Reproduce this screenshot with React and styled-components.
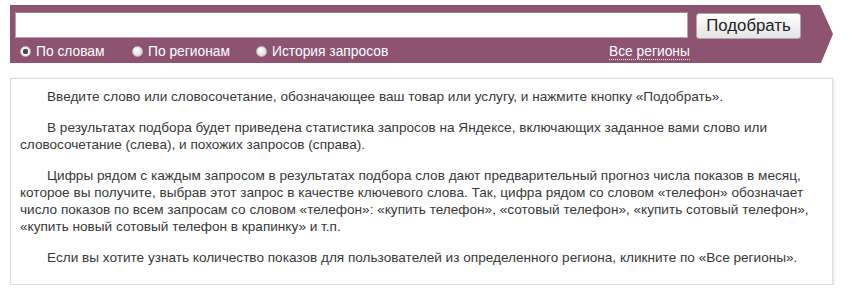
import React from 'react';
import styled, { createGlobalStyle } from 'styled-components';

const Global = createGlobalStyle`
	body {
		margin: 0;
		background: #fff;
		font-family: Arial, "Liberation Sans", sans-serif;
	}
`;

function Radio({ label, checked, width }) {
	return (
		<RadioLabel style={{ width }}>
			<Dot $checked={checked} />
			{label}
		</RadioLabel>
	);
}

export default function App() {
	return (
		<Page>
			<Global />
			<Bar>
				<SearchRow>
					<SearchInput type="text" />
					<Button>Подобрать</Button>
				</SearchRow>
				<Options>
					<Radio label="По словам" checked width={112} />
					<Radio label="По регионам" width={124} />
					<Radio label="История запросов" width={353} />
					<Regions>Все регионы</Regions>
				</Options>
			</Bar>
			<Help>
				<p>Введите слово или словосочетание, обозначающее ваш товар или услугу, и нажмите кнопку «Подобрать».</p>
				<p>
					В результатах подбора будет приведена статистика запросов на Яндексе, включающих заданное вами слово или
					словосочетание (слева), и похожих запросов (справа).
				</p>
				<p>
					Цифры рядом с каждым запросом в результатах подбора слов дают предварительный прогноз числа показов в месяц,
					которое вы получите, выбрав этот запрос в качестве ключевого слова. Так, цифра рядом со словом «телефон» обозначает
					число показов по всем запросам со словом «телефон»: «купить телефон», «сотовый телефон», «купить сотовый телефон»,
					«купить новый сотовый телефон в крапинку» и т.п.
				</p>
				<p>Если вы хотите узнать количество показов для пользователей из определенного региона, кликните по «Все регионы».</p>
			</Help>
		</Page>
	);
}

const Page = styled.div`
	padding: 5px 0 0 10px;
	width: 823px;
`;

const Bar = styled.div`
	background: #8d5371;
	height: 58px;
	padding: 7px 0 0 5px;
	box-sizing: border-box;
	clip-path: polygon(0 0, calc(100% - 13px) 0, 100% 50%, calc(100% - 12px) 100%, 0 100%);
`;

const SearchRow = styled.div`
	display: flex;
	align-items: flex-start;
	gap: 8px;
`;

const SearchInput = styled.input`
	width: 673px;
	height: 26px;
	box-sizing: border-box;
	border: 1px solid #b9a0ad;
	border-top-color: #9c8190;
	background: #fff;
	margin: 0;
	outline: none;
`;

const Button = styled.button`
	width: 105px;
	height: 26px;
	margin-top: 1px;
	box-sizing: border-box;
	border: 1px solid #a9a9a9;
	border-radius: 3px;
	background: linear-gradient(#ffffff, #e4e4e4);
	font-family: Arial, "Liberation Sans", sans-serif;
	font-size: 16.8px;
	color: #222;
	padding: 0;
`;

const Options = styled.div`
	display: flex;
	align-items: center;
	height: 25px;
	padding-left: 5px;
`;

const RadioLabel = styled.label`
	display: flex;
	align-items: center;
	gap: 5px;
	color: #fff;
	font-size: 13.8px;
	flex: none;
`;

const Dot = styled.span`
	width: 11px;
	height: 11px;
	border-radius: 50%;
	box-sizing: border-box;
	background: ${p => (p.$checked ? 'radial-gradient(circle, #4a4a4a 0 2.5px, #f2f2f2 3px)' : 'radial-gradient(circle at 40% 35%, #ffffff, #cfcfcf)')};
	border: 1px solid #bdbdbd;
`;

const Regions = styled.span`
	color: #fff;
	font-size: 13.8px;
	border-bottom: 1px dotted #f0e0ea;
	line-height: 14px;
	margin-top: 2px;
`;

const Help = styled.div`
	margin-top: 15px;
	border: 1px solid #dcdcdc;
	box-shadow: 1px 1px 3px rgba(0, 0, 0, 0.12);
	padding: 9px 20px 18px 9px;
	color: #383838;
	font-size: 13.6px;
	line-height: 17px;

	p {
		margin: 0 0 14px;
		text-indent: 27px;
	}

	p:last-child {
		margin-bottom: 0;
	}
`;
